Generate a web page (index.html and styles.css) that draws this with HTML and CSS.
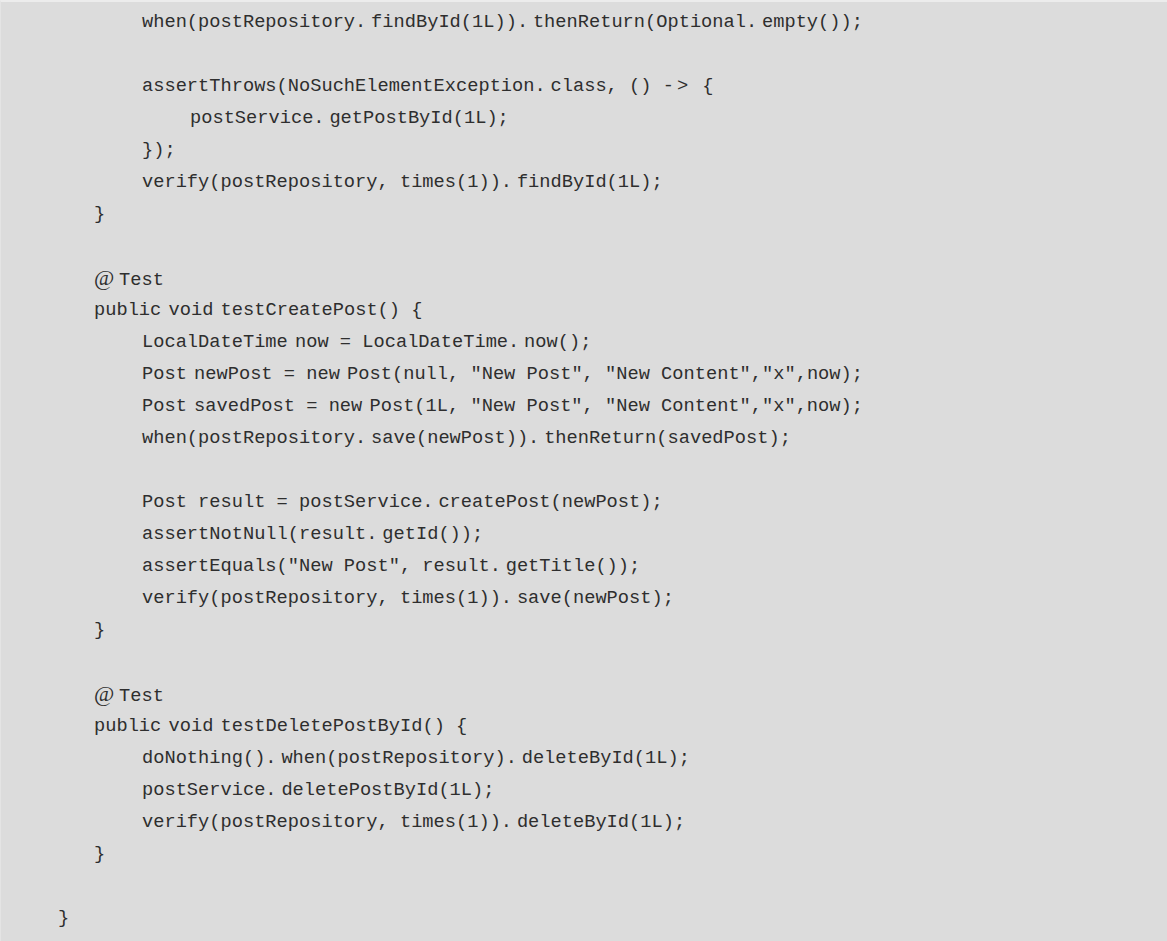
FILE: index.html
```html
<!DOCTYPE html>
<html lang="en">
<head>
<meta charset="utf-8">
<title>PostServiceTest</title>
<link rel="stylesheet" href="styles.css">
</head>
<body>
<div class="code">
  <div class="ln i2">when(postRepository<span class="d">.</span>findById(1L))<span class="d">.</span>thenReturn(Optional<span class="d">.</span>empty());</div>
  <div class="ln"></div>
  <div class="ln i2">assertThrows(NoSuchElementException<span class="d">.</span>class, () <span class="ar">-&gt;</span> {</div>
  <div class="ln i3">postService<span class="d">.</span>getPostById(1L);</div>
  <div class="ln i2">});</div>
  <div class="ln i2">verify(postRepository, times(1))<span class="d">.</span>findById(1L);</div>
  <div class="ln i1">}</div>
  <div class="ln"></div>
  <div class="ln i1"><span class="at">@</span>Test</div>
  <div class="ln i1">public<span class="sp"> </span>void<span class="sp"> </span>testCreatePost() {</div>
  <div class="ln i2">LocalDateTime<span class="sp"> </span>now = LocalDateTime<span class="d">.</span>now();</div>
  <div class="ln i2">Post<span class="sp"> </span>newPost = new<span class="sp"> </span>Post(null, "New Post", "New Content","x",now);</div>
  <div class="ln i2">Post<span class="sp"> </span>savedPost = new<span class="sp"> </span>Post(1L, "New Post", "New Content","x",now);</div>
  <div class="ln i2">when(postRepository<span class="d">.</span>save(newPost))<span class="d">.</span>thenReturn(savedPost);</div>
  <div class="ln"></div>
  <div class="ln i2">Post result = postService<span class="d">.</span>createPost(newPost);</div>
  <div class="ln i2">assertNotNull(result<span class="d">.</span>getId());</div>
  <div class="ln i2">assertEquals("New Post", result<span class="d">.</span>getTitle());</div>
  <div class="ln i2">verify(postRepository, times(1))<span class="d">.</span>save(newPost);</div>
  <div class="ln i1">}</div>
  <div class="ln"></div>
  <div class="ln i1"><span class="at">@</span>Test</div>
  <div class="ln i1">public<span class="sp"> </span>void<span class="sp"> </span>testDeletePostById() {</div>
  <div class="ln i2">doNothing()<span class="d">.</span>when(postRepository)<span class="d">.</span>deleteById(1L);</div>
  <div class="ln i2">postService<span class="d">.</span>deletePostById(1L);</div>
  <div class="ln i2">verify(postRepository, times(1))<span class="d">.</span>deleteById(1L);</div>
  <div class="ln i1">}</div>
  <div class="ln"></div>
  <div class="ln i0">}</div>
</div>
</body>
</html>
```
FILE: styles.css
```css
html, body {
  margin: 0;
  padding: 0;
  background: #dcdcdc;
}

.code {
  box-sizing: border-box;
  min-height: 941px;
  background: #dcdcdc;
  border-top: 2px solid #ececec;
  border-left: 1px solid #e4e4e4;
  padding-top: 4px;
  font-family: "Liberation Mono", "DejaVu Sans Mono", monospace;
  font-size: 18.7px;
  color: #2e2e2e;
}

.ln {
  height: 32px;
  line-height: 32px;
  white-space: pre;
}

.i0 { padding-left: 57px; }
.i1 { padding-left: 93px; }
.i2 { padding-left: 141px; }
.i3 { padding-left: 189px; }

.d {
  margin-right: 4.8px;
}

.sp {
  letter-spacing: -4px;
}

.ar {
  letter-spacing: 3px;
}

.at {
  display: inline-block;
  width: 25px;
  font-size: 22px;
  font-family: "Liberation Serif", serif;
}
```
